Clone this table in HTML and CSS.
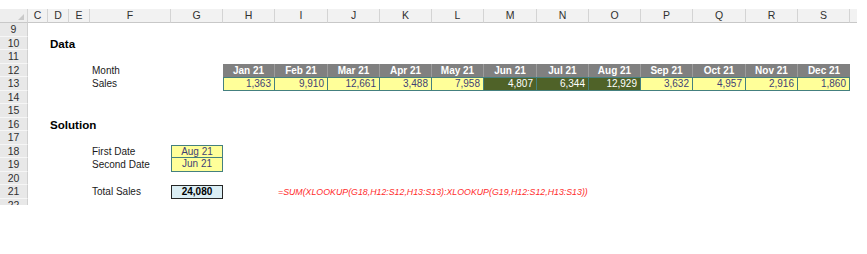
FILE: index.html
```html
<!DOCTYPE html>
<html>
<head>
<meta charset="utf-8">
<link rel="stylesheet" href="styles.css">
</head>
<body>
<div class="sheet">
  <div class="corner hc1 hr0"><span class="tri"></span></div>
  <div class="colhdr c2 hr0">C</div>
  <div class="colhdr c3 hr0">D</div>
  <div class="colhdr c4 hr0">E</div>
  <div class="colhdr c5 hr0">F</div>
  <div class="colhdr c6 hr0">G</div>
  <div class="colhdr c7 hr0">H</div>
  <div class="colhdr c8 hr0">I</div>
  <div class="colhdr c9 hr0">J</div>
  <div class="colhdr c10 hr0">K</div>
  <div class="colhdr c11 hr0">L</div>
  <div class="colhdr c12 hr0">M</div>
  <div class="colhdr c13 hr0">N</div>
  <div class="colhdr c14 hr0">O</div>
  <div class="colhdr c15 hr0">P</div>
  <div class="colhdr c16 hr0">Q</div>
  <div class="colhdr c17 hr0">R</div>
  <div class="colhdr c18 hr0">S</div>
  <div class="colhdr c19 hr0"></div>

  <div class="rowhdr hc1 r9">9</div>
  <div class="rowhdr hc1 r10">10</div>
  <div class="rowhdr hc1 r11">11</div>
  <div class="rowhdr hc1 r12">12</div>
  <div class="rowhdr hc1 r13">13</div>
  <div class="rowhdr hc1 r14">14</div>
  <div class="rowhdr hc1 r15">15</div>
  <div class="rowhdr hc1 r16">16</div>
  <div class="rowhdr hc1 r17">17</div>
  <div class="rowhdr hc1 r18">18</div>
  <div class="rowhdr hc1 r19">19</div>
  <div class="rowhdr hc1 r20">20</div>
  <div class="rowhdr hc1 r21">21</div>
  <div class="rowhdr hc1 r22">22</div>

  <div class="cell title c3 r10">Data</div>
  <div class="cell label c5 r12">Month</div>
  <div class="cell label c5 r13">Sales</div>

  <div class="month c7 r12">Jan 21</div>
  <div class="month c8 r12">Feb 21</div>
  <div class="month c9 r12">Mar 21</div>
  <div class="month c10 r12">Apr 21</div>
  <div class="month c11 r12">May 21</div>
  <div class="month c12 r12">Jun 21</div>
  <div class="month c13 r12">Jul 21</div>
  <div class="month c14 r12">Aug 21</div>
  <div class="month c15 r12">Sep 21</div>
  <div class="month c16 r12">Oct 21</div>
  <div class="month c17 r12">Nov 21</div>
  <div class="month c18 r12 last">Dec 21</div>

  <div class="val first c7 r13">1,363</div>
  <div class="val c8 r13">9,910</div>
  <div class="val c9 r13">12,661</div>
  <div class="val c10 r13">3,488</div>
  <div class="val c11 r13">7,958</div>
  <div class="val hit c12 r13">4,807</div>
  <div class="val hit c13 r13">6,344</div>
  <div class="val hit c14 r13">12,929</div>
  <div class="val c15 r13">3,632</div>
  <div class="val c16 r13">4,957</div>
  <div class="val c17 r13">2,916</div>
  <div class="val c18 r13">1,860</div>

  <div class="cell title c3 r16">Solution</div>
  <div class="cell label c5 r18">First Date</div>
  <div class="cell label c5 r19">Second Date</div>
  <div class="input top c6 r18">Aug 21</div>
  <div class="input c6 r19">Jun 21</div>

  <div class="cell label c5 r21">Total Sales</div>
  <div class="total c6 r21">24,080</div>
  <div class="formula c8 r21">=SUM(XLOOKUP(G18,H12:S12,H13:S13):XLOOKUP(G19,H12:S12,H13:S13))</div>
</div>
</body>
</html>
```

FILE: styles.css
```css
html, body {
  margin: 0;
  padding: 0;
  background: #ffffff;
}

body {
  padding-top: 9px;
  font-family: "Liberation Sans", Arial, sans-serif;
  font-size: 10px;
  color: #000;
}

.sheet {
  display: grid;
  width: 857px;
  height: 196px;
  overflow: hidden;
  grid-template-columns: 28px 20px 21px 21px 81px 52px 52px 53px 52px 52px 52px 53px 52px 52px 52px 53px 52px 52px 7px;
  grid-template-rows: 14px 14px 13px 14px 13px 14px 13px 14px 13px 14px 13px 14px 13px 14px 13px;
}

.hc1 { grid-column: 1; }
.c2 { grid-column: 2; }
.c3 { grid-column: 3; }
.c4 { grid-column: 4; }
.c5 { grid-column: 5; }
.c6 { grid-column: 6; }
.c7 { grid-column: 7; }
.c8 { grid-column: 8; }
.c9 { grid-column: 9; }
.c10 { grid-column: 10; }
.c11 { grid-column: 11; }
.c12 { grid-column: 12; }
.c13 { grid-column: 13; }
.c14 { grid-column: 14; }
.c15 { grid-column: 15; }
.c16 { grid-column: 16; }
.c17 { grid-column: 17; }
.c18 { grid-column: 18; }
.c19 { grid-column: 19; }

.hr0 { grid-row: 1; }
.r9 { grid-row: 2; }
.r10 { grid-row: 3; }
.r11 { grid-row: 4; }
.r12 { grid-row: 5; }
.r13 { grid-row: 6; }
.r14 { grid-row: 7; }
.r15 { grid-row: 8; }
.r16 { grid-row: 9; }
.r17 { grid-row: 10; }
.r18 { grid-row: 11; }
.r19 { grid-row: 12; }
.r20 { grid-row: 13; }
.r21 { grid-row: 14; }
.r22 { grid-row: 15; }

.corner {
  position: relative;
  background: #eeeeee;
  border-right: 1px solid #d4d4d4;
  border-bottom: 1px solid #c8c8c8;
  box-sizing: border-box;
}

.tri {
  position: absolute;
  right: 3px;
  bottom: 2px;
  width: 0;
  height: 0;
  border-left: 6px solid transparent;
  border-bottom: 6px solid #c9c9c9;
}

.colhdr {
  box-sizing: border-box;
  background: #f2f2f2;
  border-right: 1px solid #d4d4d4;
  border-bottom: 1px solid #c8c8c8;
  color: #303030;
  text-align: center;
  line-height: 13px;
  font-size: 10.5px;
}

.colhdr.c19 {
  border-right: none;
}

.rowhdr {
  box-sizing: border-box;
  background: #e8e8e8;
  border-bottom: 1px solid #f6f6f6;
  border-right: 1px solid #d0d0d0;
  color: #303030;
  text-align: center;
  font-size: 10.5px;
  line-height: 13px;
}

.cell {
  white-space: nowrap;
  line-height: 13px;
}

.title {
  grid-column-end: span 3;
  font-weight: bold;
  font-size: 11.6px;
  padding-left: 2px;
  line-height: 14px;
}

.label {
  padding-left: 2px;
  color: #1a1a1a;
}

.month {
  box-sizing: border-box;
  background: #808080;
  color: #ffffff;
  font-weight: bold;
  text-align: center;
  line-height: 13px;
  border-right: 1px solid #9c9c9c;
}

.month.last {
  border-right: none;
}

.val {
  box-sizing: border-box;
  background: #ffff99;
  color: #3f3f76;
  text-align: right;
  padding-right: 3px;
  line-height: 12px;
  border-top: 1px solid #44807f;
  border-bottom: 1px solid #44807f;
  border-right: 1px solid #44807f;
}

.val.first {
  border-left: 1px solid #44807f;
}

.val.hit {
  background: #4f6228;
  color: #ffffff;
}

.input {
  box-sizing: border-box;
  background: #ffff99;
  color: #3f3f76;
  text-align: center;
  line-height: 12px;
  border: 1px solid #44807f;
  border-top: none;
}

.input.top {
  border-top: 1px solid #44807f;
  line-height: 11px;
}

.total {
  box-sizing: border-box;
  background: #dbeef4;
  border: 1px solid #262626;
  font-weight: bold;
  text-align: center;
  line-height: 12px;
}

.formula {
  grid-column-end: span 10;
  padding-left: 3px;
  color: #ff2b2b;
  font-style: italic;
  font-size: 8.8px;
  line-height: 14px;
  white-space: nowrap;
}
```
